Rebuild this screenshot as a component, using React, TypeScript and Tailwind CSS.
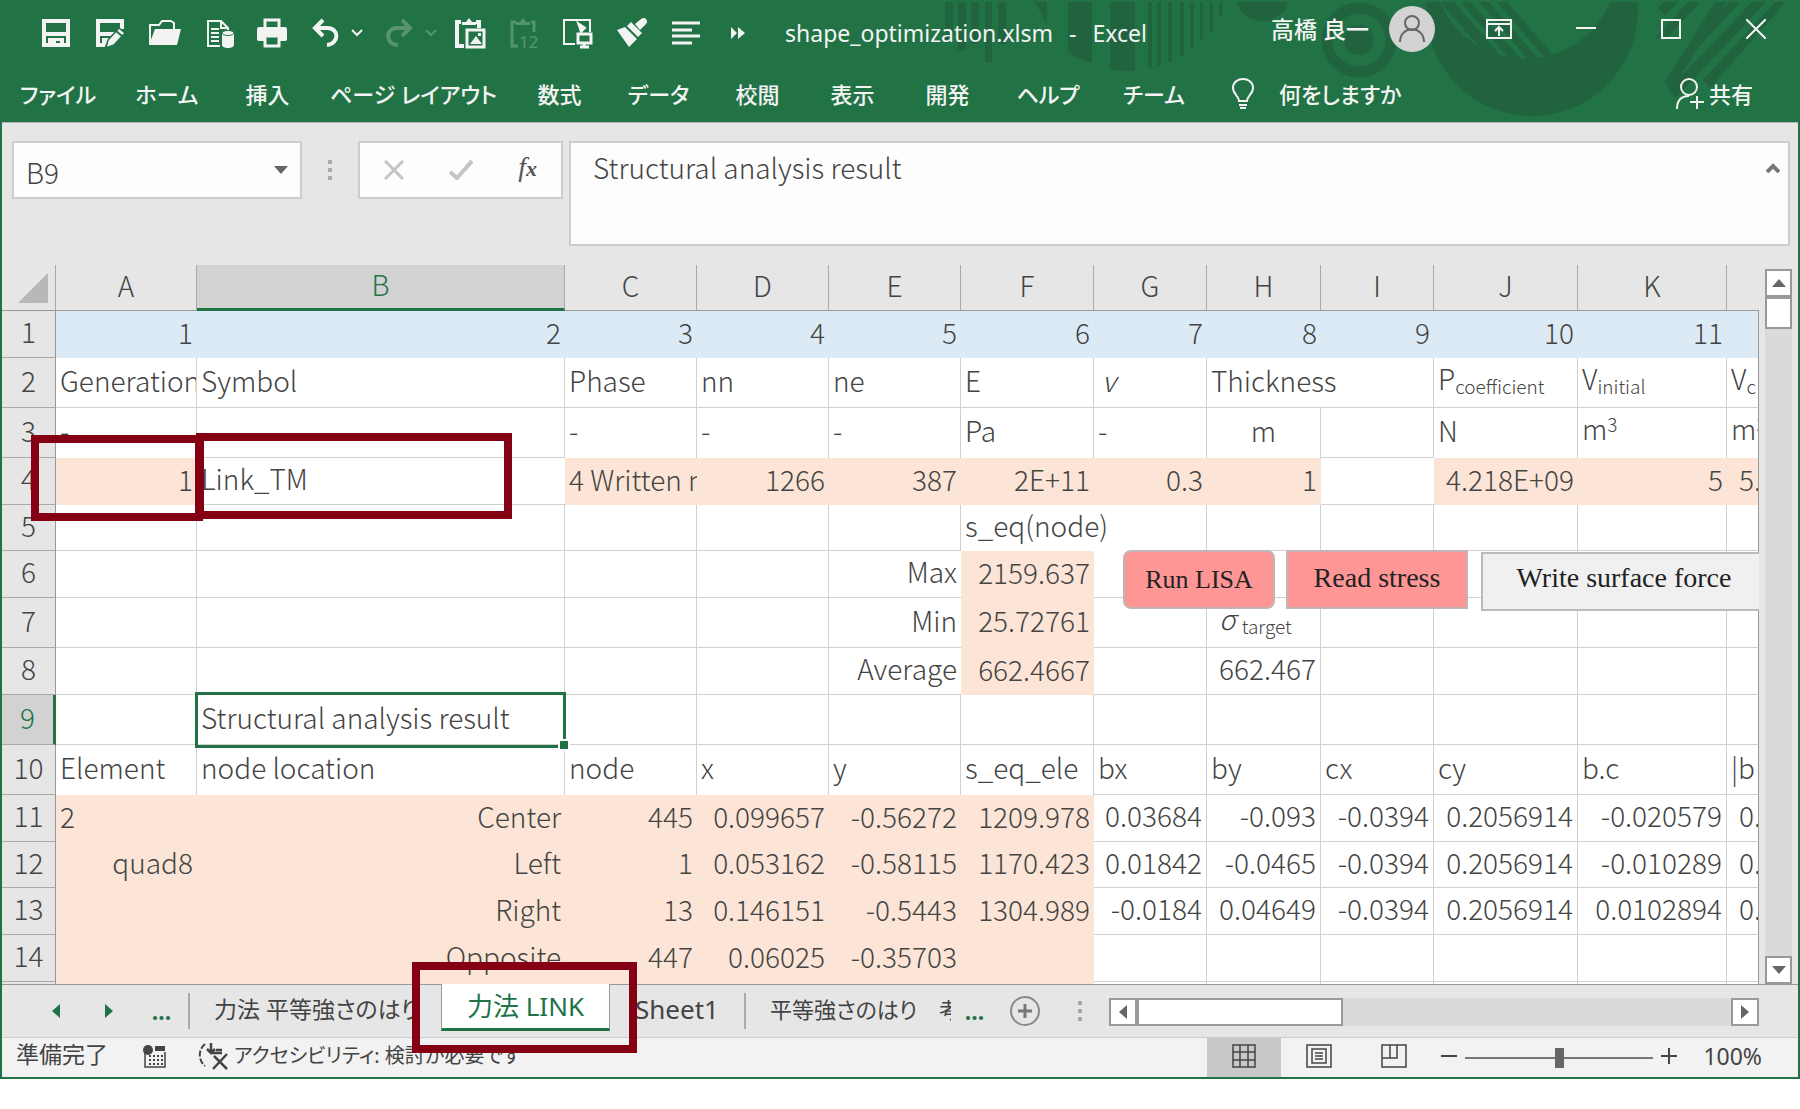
import type { ReactNode } from "react";
import clsx from "clsx";

type Align = "l" | "r" | "c";

type Cell = {
  content?: ReactNode;
  align?: Align;
  span?: number;
};

type Row = {
  height: string;
  cells: Cell[];
};

const ribbonTabs = [
  { label: "ファイル", width: "w-[112px]" },
  { label: "ホーム", width: "w-[106px]" },
  { label: "挿入", width: "w-[95px]" },
  { label: "ページ レイアウト", width: "w-[197px]" },
  { label: "数式", width: "w-[95px]" },
  { label: "データ", width: "w-[103px]" },
  { label: "校閲", width: "w-[95px]" },
  { label: "表示", width: "w-[95px]" },
  { label: "開発", width: "w-[95px]" },
  { label: "ヘルプ", width: "w-[106px]" },
  { label: "チーム", width: "w-[106px]" },
];

const columns = [
  { name: "A", width: "w-[141px]" },
  { name: "B", width: "w-[368px]" },
  { name: "C", width: "w-[132px]" },
  { name: "D", width: "w-[132px]" },
  { name: "E", width: "w-[132px]" },
  { name: "F", width: "w-[133px]" },
  { name: "G", width: "w-[113px]" },
  { name: "H", width: "w-[114px]" },
  { name: "I", width: "w-[113px]" },
  { name: "J", width: "w-[144px]" },
  { name: "K", width: "w-[149px]" },
  { name: "", width: "w-auto" },
];

const l = (content: ReactNode, span?: number): Cell => ({ content, align: "l", span });
const r = (content: ReactNode): Cell => ({ content, align: "r" });
const c = (content: ReactNode): Cell => ({ content, align: "c" });
const e = (count: number): Cell[] => Array.from({ length: count }, () => ({}));

const sub = (text: string) => <span className="relative top-1 text-[19px]">{text}</span>;
const sup = (text: string) => <span className="relative -top-2 text-[19px]">{text}</span>;

const rows: Row[] = [
  {
    height: "h-[47px]",
    cells: [...Array.from({ length: 11 }, (_, i) => r(String(i + 1))), {}],
  },
  {
    height: "h-[50px]",
    cells: [
      l("Generation"),
      l("Symbol"),
      l("Phase"),
      l("nn"),
      l("ne"),
      l("E"),
      l(<i className="pl-1">v</i>),
      l("Thickness", 2),
      l(<>P{sub("coefficient")}</>),
      l(<>V{sub("initial")}</>),
      l(<>V{sub("c")}</>),
    ],
  },
  {
    height: "h-[50px]",
    cells: [l("-"), {}, l("-"), l("-"), l("-"), l("Pa"), l("-"), c("m"), {}, l("N"), l(<>m{sup("3")}</>), l(<>m{sup("3")}</>)],
  },
  {
    height: "h-[47px]",
    cells: [r("1"), l("Link_TM"), l("4 Written n"), r("1266"), r("387"), r("2E+11"), r("0.3"), r("1"), {}, r("4.218E+09"), r("5"), l(<span className="pl-2">5.</span>)],
  },
  { height: "h-[46px]", cells: [...e(5), l("s_eq(node)", 2), ...e(5)] },
  { height: "h-[47px]", cells: [...e(4), r("Max"), r("2159.637"), ...e(6)] },
  {
    height: "h-[50px]",
    cells: [...e(4), r("Min"), r("25.72761"), {}, l(<span className="pl-2"><i>σ</i> {sub("target")}</span>), ...e(4)],
  },
  { height: "h-[47px]", cells: [...e(4), r("Average"), r("662.4667"), {}, r("662.467"), ...e(4)] },
  { height: "h-[50px]", cells: [{}, l("Structural analysis result"), ...e(10)] },
  {
    height: "h-[50px]",
    cells: [l("Element"), l("node location"), l("node"), l("x"), l("y"), l("s_eq_ele"), l("bx"), l("by"), l("cx"), l("cy"), l("b.c"), l("|b")],
  },
  {
    height: "h-[47px]",
    cells: [l("2"), r("Center"), r("445"), r("0.099657"), r("-0.56272"), r("1209.978"), r("0.03684"), r("-0.093"), r("-0.0394"), r("0.2056914"), r("-0.020579"), l(<span className="pl-2">0.</span>)],
  },
  {
    height: "h-[46px]",
    cells: [r("quad8"), r("Left"), r("1"), r("0.053162"), r("-0.58115"), r("1170.423"), r("0.01842"), r("-0.0465"), r("-0.0394"), r("0.2056914"), r("-0.010289"), l(<span className="pl-2">0.</span>)],
  },
  {
    height: "h-[47px]",
    cells: [{}, r("Right"), r("13"), r("0.146151"), r("-0.5443"), r("1304.989"), r("-0.0184"), r("0.04649"), r("-0.0394"), r("0.2056914"), r("0.0102894"), l(<span className="pl-2">0.</span>)],
  },
  {
    height: "h-[47px]",
    cells: [{}, r("Opposite"), r("447"), r("0.06025"), r("-0.35703"), ...e(7)],
  },
  { height: "h-[2px]", cells: e(12) },
];

// Relleno de cada celda: fila y columna empiezan en 0
function fillOf(row: number, col: number): "blue" | "peach" | null {
  if (row === 0) return "blue";
  if (row === 3) return col === 1 || col === 8 ? null : "peach";
  if (row >= 5 && row <= 7) return col === 5 ? "peach" : null;
  if (row >= 10) return col <= 5 ? "peach" : null;
  return null;
}

export default function App() {
  return (
    <div className="w-full border-x-2 border-b-2 border-[#217346] bg-[#e6e6e6] font-['Noto_Sans','Noto_Sans_CJK_JP',sans-serif] text-[#444]">
      <header className="relative bg-[#217346] text-[#f3f3f3] [font-feature-settings:'palt']">
        <TitlePattern />
        <TitleBar />
        <RibbonTabs />
      </header>
      <FormulaBar />
      <main className="flex">
        <Sheet />
        <VerticalScroll />
      </main>
      <SheetTabs />
      <StatusBar />
    </div>
  );
}

function TitlePattern() {
  return (
    <svg className="absolute right-0 top-0 h-[122px] w-[860px]" viewBox="938 0 860 122" fill="#22633f" aria-hidden>
      <path d="M945 2h8v40h-8zM958 2h8v48h-8zM971 2h8v42h-8zM985 2h7v60h-7zM998 2h8v42h-8zM1035 2h12v22z" />
      <path d="M1068 2h24v61q-14-3-24-12zM1110 2h25v69q-14 1-25-2zM1148 2h4v66h-4zM1157 2h4v64h-4zM1168 2h4v60h-4zM1180 2h4v54h-4zM1190 2h4v47h-4zM1200 2h3v39h-3zM1210 2h3v30h-3zM1219 2h3v14h-3z" />
      <path d="M1237 2h51a26 24 0 0 1-51 0z" />
      <circle cx="1359" cy="40" r="15" />
      <circle cx="1359" cy="40" r="32" fill="none" stroke="#22633f" strokeWidth="11" />
      <path d="M1426 2h14a92 92 0 0 0 170 0h28v8a106 106 0 0 1-212 0z" />
      <path d="M1440 2l75 86h14L1454 2zM1461 2l73 86 10-2L1471 2zM1479 2l70 82 8-4L1489 2zM1497 2l64 75 7-5L1507 2z" />
      <path d="M1658 8l6-6h14l-13 14zM1688 2h12l-33 36h-12zM1715 2h11l-55 90-6-10zM1668 90l84-88h14l-90 96zM1684 50l46-48h10l-44 48zM1703 80l72-78h11l-76 86z" />
    </svg>
  );
}

function QuickButton({ label, faded, className, children }: { label: string; faded?: boolean; className: string; children: ReactNode }) {
  return (
    <button type="button" aria-label={label} className={clsx("flex shrink-0 items-center", faded && "opacity-25", className)}>
      {children}
    </button>
  );
}

function Icon({ className = "h-8 w-8", view = "0 0 32 32", children }: { className?: string; view?: string; children: ReactNode }) {
  return (
    <svg className={clsx("shrink-0", className)} viewBox={view} fill="none" stroke="currentColor" strokeWidth="2" aria-hidden>
      {children}
    </svg>
  );
}

function TitleBar() {
  return (
    <div className="relative flex h-[66px] items-center pl-[38px]">
      <QuickButton label="上書き保存" className="w-[54px]">
        <Icon>
          <path d="M4 4h24v24H4z" strokeWidth="4" />
          <path d="M3 15h26v4H3zM8 21h16v8h-4v-5h-4v5H8z" fill="currentColor" stroke="none" />
        </Icon>
      </QuickButton>
      <QuickButton label="名前を付けて保存" className="w-[53px]">
        <Icon>
          <path d="M28 12V4H4v24h7" strokeWidth="4" />
          <path d="M3 15h18l-4 4H3zM8 21h7l-4 8H8z" fill="currentColor" stroke="none" />
          <path d="M12 31l2-8L25 11l6 5-11 12z" fill="currentColor" stroke="#217346" strokeWidth="1.5" />
          <path d="M22 14l6 5" stroke="#217346" />
        </Icon>
      </QuickButton>
      <QuickButton label="開く" className="w-[57px]">
        <Icon className="h-8 w-9" view="0 0 36 32">
          <path d="M3 27V8h9l3-4h9l3 2v6" />
          <path d="M8 12h26l-4 16H2z" fill="currentColor" stroke="none" />
        </Icon>
      </QuickButton>
      <QuickButton label="データ" className="w-[52px]">
        <Icon>
          <path d="M16 29H4V4h13l7 7v2M17 4v7h7" />
          <path d="M7 12h8M7 16h8M7 20h8M7 24h8" />
          <path d="M18 17v11c0 4 12 4 12 0V17z" fill="currentColor" stroke="none" />
          <ellipse cx="24" cy="16" rx="6" ry="2.5" fill="currentColor" stroke="#217346" strokeWidth="1" />
        </Icon>
      </QuickButton>
      <QuickButton label="印刷" className="w-[54px]">
        <Icon>
          <path d="M9 10V3h14v7" strokeWidth="3" />
          <rect x="1" y="10" width="30" height="14" rx="2" fill="currentColor" stroke="none" />
          <path d="M9 19h14v10H9z" fill="#217346" strokeWidth="3" />
        </Icon>
      </QuickButton>
      <QuickButton label="元に戻す" className="w-[41px]">
        <Icon>
          <path d="M4 11h13c13 0 12 16 0 17" strokeWidth="4" />
          <path d="M13 3l-8 8 8 8" strokeWidth="4" />
        </Icon>
      </QuickButton>
      <QuickButton label="元に戻す一覧" className="w-[33px]">
        <Icon className="h-3 w-3" view="0 0 12 12">
          <path d="M1 3l5 5 5-5" />
        </Icon>
      </QuickButton>
      <QuickButton label="やり直し" faded className="w-[41px]">
        <Icon>
          <path d="M26 11H13c-12 0-12 17 1 17" strokeWidth="4" />
          <path d="M18 3l8 8-8 8" strokeWidth="4" />
        </Icon>
      </QuickButton>
      <QuickButton label="やり直し一覧" faded className="w-[29px]">
        <Icon className="h-3 w-3" view="0 0 12 12">
          <path d="M1 3l5 5 5-5" />
        </Icon>
      </QuickButton>
      <QuickButton label="図として貼り付け" className="w-[54px]">
        <Icon>
          <path d="M10 29H3V5h4M22 5h3v6" strokeWidth="4" />
          <path d="M8 8V5h4l3-4 3 4h4v3z" fill="currentColor" stroke="none" />
          <path d="M13 13h17v17H13z" strokeWidth="3" />
          <path d="M16 27l6-8 6 8zM24 16h3v3h-3z" fill="currentColor" stroke="none" />
        </Icon>
      </QuickButton>
      <QuickButton label="値の貼り付け" faded className="w-[53px]">
        <Icon>
          <path d="M10 29H4V5h4M23 5h3v10" strokeWidth="3" />
          <path d="M8 8V5h4l3-4 3 4h4v3z" fill="currentColor" stroke="none" />
          <text x="11" y="31" fontSize="17" fill="currentColor" stroke="none">12</text>
        </Icon>
      </QuickButton>
      <QuickButton label="画面" className="w-[55px]">
        <Icon>
          <path d="M14 27H3V3h26v12" />
          <path d="M17 17h13v9H17zM23 26v4M19 30h9" strokeWidth="3" />
          <path d="M17 6l7 5-4 4z" fill="currentColor" />
        </Icon>
      </QuickButton>
      <QuickButton label="書式のコピー" className="w-[54px]">
        <Icon>
          <path d="M1 13l8-3 12 12-8 8zM11 9l4-4 11 11-4 4zM19 7l6-5c4-3 8 2 5 5l-6 6z" fill="currentColor" stroke="none" />
        </Icon>
      </QuickButton>
      <QuickButton label="左揃え" className="w-[60px]">
        <Icon>
          <path d="M2 6h28M2 13h20M2 19h28M2 26h20" strokeWidth="3" />
        </Icon>
      </QuickButton>
      <QuickButton label="その他" className="w-[55px]">
        <Icon className="h-4 w-4" view="0 0 16 16">
          <path d="M1 2l6 6-6 6zM8 2l7 6-7 6z" fill="currentColor" stroke="none" />
        </Icon>
      </QuickButton>
      <h1 className="flex shrink-0 gap-4 text-[23px] leading-8">
        <span>shape_optimization.xlsm</span>
        <span>-</span>
        <span>Excel</span>
      </h1>
      <div className="ml-auto flex items-center pb-2 pr-8">
        <span className="text-[23px] font-medium leading-8">高橋 良一</span>
        <button type="button" aria-label="アカウント" className="ml-5 mr-[51px] flex h-[46px] w-[46px] items-center justify-center rounded-full bg-[#d3d3d3] text-[#666]">
          <Icon>
            <circle cx="16" cy="10" r="7" />
            <path d="M4 29c0-17 24-17 24 0" />
          </Icon>
        </button>
        <button type="button" aria-label="リボンの表示オプション" className="mr-[64px]">
          <Icon className="h-5 w-[26px]" view="0 0 26 20">
            <path d="M1 1h24v18H1zM1 5h24" />
            <path d="M13 17V8M9 12l4-4 4 4" />
          </Icon>
        </button>
        <button type="button" aria-label="最小化" className="mr-[65px]">
          <Icon className="h-5 w-5" view="0 0 20 20">
            <path d="M0 9h20" />
          </Icon>
        </button>
        <button type="button" aria-label="最大化" className="mr-[65px]">
          <Icon className="h-5 w-5" view="0 0 20 20">
            <path d="M1 1h18v18H1z" />
          </Icon>
        </button>
        <button type="button" aria-label="閉じる">
          <Icon className="h-5 w-5" view="0 0 20 20">
            <path d="M0 0l20 20M20 0L0 20" />
          </Icon>
        </button>
      </div>
    </div>
  );
}

function RibbonTabs() {
  return (
    <nav className="relative flex h-14 items-center text-[22px] font-medium leading-8">
      {ribbonTabs.map((tab) => (
        <button key={tab.label} type="button" className={clsx("shrink-0 whitespace-nowrap text-center", tab.width)}>
          {tab.label}
        </button>
      ))}
      <button type="button" className="ml-6 flex items-center gap-6">
        <Icon className="h-8 w-6" view="0 0 24 32">
          <path d="M8 23c0-5-6-7-6-13 0-12 20-12 20 0 0 6-6 8-6 13zM8 27h8M9 30h6" />
        </Icon>
        何をしますか
      </button>
      <button type="button" className="ml-auto mr-[45px] flex items-center gap-1">
        <Icon>
          <circle cx="16" cy="9" r="8" />
          <path d="M4 31c0-10 5-13 12-13M24 18v13M17 24h14" />
        </Icon>
        共有
      </button>
    </nav>
  );
}

function Grip() {
  return (
    <span className="flex flex-col gap-1" aria-hidden>
      <span className="h-1 w-1 bg-[#aaa]" />
      <span className="h-1 w-1 bg-[#aaa]" />
      <span className="h-1 w-1 bg-[#aaa]" />
    </span>
  );
}

function FormulaBar() {
  return (
    <section className="flex items-start border-t border-[#b5b5b5] pb-[19px] pl-[10px] pr-2 pt-[18px] font-['Noto_Sans_CJK_JP',sans-serif] text-[28px] font-light leading-8">
      <div className="flex h-[58px] w-[290px] items-center border-2 border-[#cdcdcd] bg-[#fdfdfd]">
        <input aria-label="名前ボックス" defaultValue="B9" className="h-full w-0 flex-1 bg-transparent pl-3 pt-1 outline-none" />
        <button type="button" aria-label="名前の一覧" className="mr-3">
          <Icon className="h-2 w-[14px]" view="0 0 14 8">
            <path d="M0 0h14L7 8z" fill="#666" stroke="none" />
          </Icon>
        </button>
      </div>
      <div className="flex h-[58px] w-14 items-center justify-center">
        <Grip />
      </div>
      <div className="mr-[6px] flex h-[58px] w-[205px] items-center justify-between border-2 border-[#cdcdcd] bg-[#fdfdfd] pl-6 pr-6 text-[#c4c4c4]">
        <button type="button" aria-label="キャンセル">
          <Icon className="h-5 w-5" view="0 0 20 20">
            <path d="M1 1l18 18M19 1L1 19" strokeWidth="3" />
          </Icon>
        </button>
        <button type="button" aria-label="入力">
          <Icon className="h-5 w-6" view="0 0 24 20">
            <path d="M1 12l7 6L23 1" strokeWidth="4" />
          </Icon>
        </button>
        <button type="button" aria-label="関数の挿入" className="pb-1 font-['Liberation_Serif',serif] font-normal italic text-[#555]">
          f<span className="text-[22px] font-bold">x</span>
        </button>
      </div>
      <div className="flex h-[105px] flex-1 items-start border-2 border-[#cdcdcd] bg-[#fdfdfd]">
        <textarea aria-label="数式バー" defaultValue="Structural analysis result" className="h-full flex-1 resize-none bg-transparent pl-[22px] pt-2 outline-none" />
        <button type="button" aria-label="数式バーを折りたたむ" className="mr-2 mt-5">
          <Icon className="h-[10px] w-[14px]" view="0 0 14 10">
            <path d="M1 9l6-6 6 6" strokeWidth="4" stroke="#777" />
          </Icon>
        </button>
      </div>
    </section>
  );
}

function Sheet() {
  return (
    <div className="relative min-w-0 flex-1 overflow-hidden font-['Noto_Sans_CJK_JP',sans-serif] text-[28px] font-light leading-8">
      <table className="w-full table-fixed border-separate border-spacing-0">
        <colgroup>
          <col className="w-[54px]" />
          {columns.map((col, i) => (
            <col key={i} className={col.width} />
          ))}
        </colgroup>
        <thead>
          <tr className="h-[46px]">
            <th className="border-b border-r border-b-[#999] border-r-[#aaa] p-0">
              <Icon className="ml-4 h-[30px] w-[30px]" view="0 0 30 30">
                <path d="M30 0v30H0z" fill="#b7b7b7" stroke="none" />
              </Icon>
            </th>
            {columns.map((col, i) => (
              <th
                key={i}
                scope="col"
                className={clsx(
                  "p-0 pb-[6px] text-center font-light",
                  col.name === "B" ? "border-b-[3px] border-b-[#217346] bg-[#d2d2d2] text-[#217346]" : "border-b border-b-[#999]",
                  col.name && "border-r border-r-[#aaa]",
                )}
              >
                {col.name}
              </th>
            ))}
          </tr>
        </thead>
        <tbody>
          {rows.map((row, i) => (
            <SheetRow key={i} row={row} index={i} />
          ))}
        </tbody>
      </table>

      {/* Selección activa B9 */}
      <div className="absolute left-[193px] top-[427px] h-[56px] w-[371px] border-[3px] border-[#217346]" />
      <div className="absolute left-[556px] top-[474px] h-[12px] w-[12px] border-2 border-white bg-[#217346]" />

      {/* Botones de macro colocados encima de las celdas */}
      <div className="font-['Liberation_Serif',serif] font-normal text-[#222]">
        <button type="button" className="absolute left-[1121px] top-[285px] h-[59px] w-[152px] rounded-lg border-2 border-[#c4b4b4] bg-[#ff9696] text-[26px]">
          Run LISA
        </button>
        <button type="button" className="absolute left-[1284px] top-[285px] h-[59px] w-[182px] border-2 border-[#c4b4b4] bg-[#ff9696] pb-1">
          Read stress
        </button>
        <button type="button" className="absolute left-[1479px] top-[287px] h-[59px] w-[286px] border-2 border-[#bbb] bg-[#f0f0f0] pb-2">
          Write surface force
        </button>
      </div>

      <div className="absolute left-[29px] top-[170px] h-[86px] w-[172px] border-8 border-[#850012]" />
      <div className="absolute left-[194px] top-[168px] h-[86px] w-[316px] border-8 border-[#850012]" />
    </div>
  );
}

function SheetRow({ row, index }: { row: Row; index: number }) {
  const selected = index === 8;
  let col = 0;
  return (
    <tr className={row.height}>
      <th
        scope="row"
        className={clsx(
          "p-0 text-center font-light",
          index < 14 && "border-b border-b-[#aaa] pb-[6px]",
          selected ? "border-r-[3px] border-r-[#217346] bg-[#d2d2d2] text-[#217346]" : "border-r border-r-[#999]",
        )}
      >
        {index < 14 && index + 1}
      </th>
      {row.cells.map((cell, i) => {
        const span = cell.span ?? 1;
        const start = col;
        const end = start + span - 1;
        col += span;
        const fill = fillOf(index, start);
        const last = end === 11;
        return (
          <td
            key={i}
            colSpan={span}
            className={clsx(
              "overflow-hidden whitespace-nowrap p-0",
              cell.content && "px-1 pb-[6px]",
              cell.align === "r" && "text-right",
              cell.align === "c" && "text-center",
              fill === "blue" && "bg-[#dceaf6]",
              fill === "peach" && "bg-[#fce4d6]",
              !fill && "bg-white",
              last && "border-r border-r-[#999]",
              !last && !fill && !fillOf(index, end + 1) && "border-r border-r-[#d0d0d0]",
              index < 14 && !fill && !fillOf(index + 1, start) && "border-b border-b-[#d0d0d0]",
            )}
          >
            {cell.content}
          </td>
        );
      })}
    </tr>
  );
}

function ArrowButton({ label, d, className }: { label: string; d: string; className: string }) {
  return (
    <button type="button" aria-label={label} className={clsx("flex shrink-0 items-center justify-center border-2 border-[#999] bg-white", className)}>
      <Icon className="h-[14px] w-[14px]" view="0 0 14 14">
        <path d={d} fill="#666" stroke="none" />
      </Icon>
    </button>
  );
}

function VerticalScroll() {
  return (
    <div className="flex flex-col px-[6px] pt-1">
      <ArrowButton label="上へスクロール" d="M0 11l7-8 7 8z" className="h-7 w-[27px]" />
      <div className="flex-1 bg-[#dadada]">
        <div className="h-8 border-2 border-[#999] bg-white" />
      </div>
      <ArrowButton label="下へスクロール" d="M0 3l7 8 7-8z" className="h-7 w-[27px]" />
    </div>
  );
}

function SheetTabs() {
  return (
    <div className="relative flex h-[53px] border-t border-[#999] pl-[27px] pr-[39px] text-[23px] leading-8 [font-feature-settings:'palt']">
      <button type="button" aria-label="前のシート" className="flex w-[53px] items-center justify-center">
        <Icon className="h-[14px] w-2" view="0 0 8 14">
          <path d="M8 0v14L0 7z" fill="#217346" stroke="none" />
        </Icon>
      </button>
      <button type="button" aria-label="次のシート" className="flex w-[53px] items-center justify-center">
        <Icon className="h-[14px] w-2" view="0 0 8 14">
          <path d="M0 0v14l8-7z" fill="#217346" stroke="none" />
        </Icon>
      </button>
      <button type="button" className="w-[53px] font-bold text-[#217346]">...</button>
      <button type="button" className="my-2 w-[253px] overflow-hidden whitespace-nowrap border-l-2 border-[#aaa] pb-1 pl-6 text-left">
        力法 平等強さのはり
      </button>
      <button type="button" className="-mt-px mb-[6px] w-[169px] border-x border-b-[3px] border-x-[#999] border-b-[#217346] bg-white text-[26px] text-[#217346]">
        力法 LINK
      </button>
      <button type="button" className="my-2 w-[136px] border-r-2 border-[#aaa] pb-1 text-[26px]">Sheet1</button>
      <button type="button" className="my-2 w-[205px] overflow-hidden whitespace-nowrap pb-1 pl-6 text-left text-[22px]">
        平等強さのはり　考
      </button>
      <button type="button" className="w-[47px] font-bold text-[#217346]">...</button>
      <button type="button" aria-label="新しいシート" className="ml-3 mr-[38px]">
        <Icon className="h-[30px] w-[30px]" view="0 0 30 30">
          <circle cx="15" cy="15" r="14" stroke="#888" />
          <path d="M15 8v14M8 15h14" stroke="#777" strokeWidth="3" />
        </Icon>
      </button>
      <div className="mr-[27px] flex items-center">
        <Grip />
      </div>
      <div className="mt-[13px] flex h-7 flex-1 bg-[#dadada]">
        <ArrowButton label="左へスクロール" d="M11 0v14L3 7z" className="w-[28px]" />
        <div className="w-[206px] border-2 border-[#999] bg-white" />
        <ArrowButton label="右へスクロール" d="M3 0v14l8-7z" className="ml-auto w-[28px]" />
      </div>

      <div className="absolute left-[410px] top-[-23px] h-[91px] w-[225px] border-8 border-[#850012]" />
    </div>
  );
}

function StatusBar() {
  return (
    <footer className="flex h-10 items-center border-t border-[#ccc] bg-[#f2f2f2] pl-[14px] text-[23px] leading-8 [font-feature-settings:'palt']">
      <span className="w-[126px] pb-2">準備完了</span>
      <button type="button" aria-label="マクロの記録" className="w-[56px] pb-1">
        <Icon className="h-6 w-6" view="0 0 24 24">
          <path d="M3 8v15h20V8" strokeWidth="1.5" />
          <circle cx="6" cy="6" r="5" fill="currentColor" stroke="none" />
          <path d="M13 2h10v5H13z" fill="currentColor" stroke="none" />
          <path d="M7 12h14M7 16h14M7 20h14" strokeDasharray="2 2" />
        </Icon>
      </button>
      <button type="button" className="flex items-center gap-1 pb-1 text-[20px]">
        <Icon className="h-7 w-8" view="0 0 32 28">
          <path d="M7 2C0 8 0 18 7 24" strokeDasharray="6 2" />
          <path d="M13 1v9M9 7l4 4 4-4M18 8h6M13 11h11M16 14l13 13M29 12L15 27" strokeWidth="2.5" />
        </Icon>
        アクセシビリティ: 検討が必要です
      </button>
      <div className="ml-auto flex h-full items-center pr-9">
        <button type="button" aria-label="標準" className="flex h-full w-[74px] items-center justify-center bg-[#c8c8c8] pb-1">
          <Icon className="h-6 w-6" view="0 0 24 24">
            <path d="M1 1h22v22H1zM8 1v22M16 1v22M1 8h22M1 16h22" strokeWidth="1.5" />
          </Icon>
        </button>
        <button type="button" aria-label="ページ レイアウト" className="flex w-[75px] items-center justify-center pb-1">
          <Icon className="h-6 w-[26px]" view="0 0 26 24">
            <path d="M1 1h24v22H1zM6 5h14v14H6zM9 9h8M9 12h8M9 15h8" strokeWidth="1.5" />
          </Icon>
        </button>
        <button type="button" aria-label="改ページ プレビュー" className="flex w-[75px] items-center justify-center pb-1">
          <Icon className="h-6 w-[26px]" view="0 0 26 24">
            <path d="M1 1h24v22H1zM1 14h15V1M9 1v13" strokeWidth="1.5" />
          </Icon>
        </button>
        <button type="button" aria-label="縮小" className="ml-[10px] pb-1">
          <Icon className="h-4 w-4" view="0 0 16 16">
            <path d="M0 8h16" />
          </Icon>
        </button>
        <input
          type="range"
          aria-label="ズーム"
          min={0}
          max={200}
          defaultValue={100}
          className="mx-2 h-5 w-[188px] appearance-none bg-transparent [&::-webkit-slider-runnable-track]:h-[2px] [&::-webkit-slider-runnable-track]:bg-[#777] [&::-webkit-slider-thumb]:-mt-[9px] [&::-webkit-slider-thumb]:h-5 [&::-webkit-slider-thumb]:w-[9px] [&::-webkit-slider-thumb]:appearance-none [&::-webkit-slider-thumb]:bg-[#666]"
        />
        <button type="button" aria-label="拡大" className="pb-1">
          <Icon className="h-4 w-4" view="0 0 16 16">
            <path d="M0 8h16M8 0v16" />
          </Icon>
        </button>
        <span className="w-[85px] pb-1 text-right">100%</span>
      </div>
    </footer>
  );
}
